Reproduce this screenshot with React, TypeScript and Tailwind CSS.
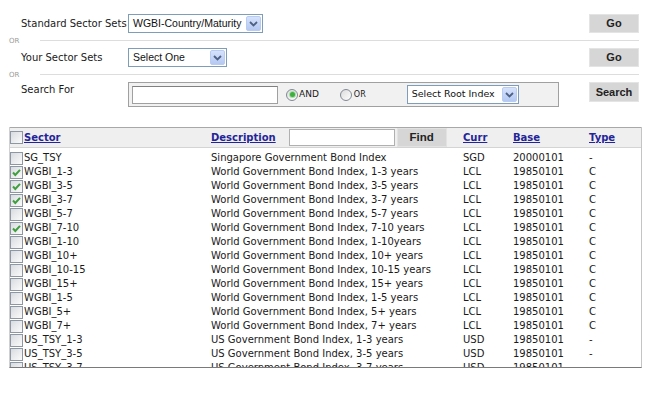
import React from "react";

type Row = { s: string; d: string; c: string; b: string; t: string; on?: boolean };

const rows: Row[] = [
  { s: "SG_TSY", d: "Singapore Government Bond Index", c: "SGD", b: "20000101", t: "-" },
  { s: "WGBI_1-3", d: "World Government Bond Index, 1-3 years", c: "LCL", b: "19850101", t: "C", on: true },
  { s: "WGBI_3-5", d: "World Government Bond Index, 3-5 years", c: "LCL", b: "19850101", t: "C", on: true },
  { s: "WGBI_3-7", d: "World Government Bond Index, 3-7 years", c: "LCL", b: "19850101", t: "C", on: true },
  { s: "WGBI_5-7", d: "World Government Bond Index, 5-7 years", c: "LCL", b: "19850101", t: "C" },
  { s: "WGBI_7-10", d: "World Government Bond Index, 7-10 years", c: "LCL", b: "19850101", t: "C", on: true },
  { s: "WGBI_1-10", d: "World Government Bond Index, 1-10years", c: "LCL", b: "19850101", t: "C" },
  { s: "WGBI_10+", d: "World Government Bond Index, 10+ years", c: "LCL", b: "19850101", t: "C" },
  { s: "WGBI_10-15", d: "World Government Bond Index, 10-15 years", c: "LCL", b: "19850101", t: "C" },
  { s: "WGBI_15+", d: "World Government Bond Index, 15+ years", c: "LCL", b: "19850101", t: "C" },
  { s: "WGBI_1-5", d: "World Government Bond Index, 1-5 years", c: "LCL", b: "19850101", t: "C" },
  { s: "WGBI_5+", d: "World Government Bond Index, 5+ years", c: "LCL", b: "19850101", t: "C" },
  { s: "WGBI_7+", d: "World Government Bond Index, 7+ years", c: "LCL", b: "19850101", t: "C" },
  { s: "US_TSY_1-3", d: "US Government Bond Index, 1-3 years", c: "USD", b: "19850101", t: "-" },
  { s: "US_TSY_3-5", d: "US Government Bond Index, 3-5 years", c: "USD", b: "19850101", t: "-" },
  { s: "US_TSY_3-7", d: "US Government Bond Index, 3-7 years", c: "USD", b: "19850101", t: "-" },
];

function Arrow() {
  return (
    <div className="w-[15px] h-[15px] mr-[1px] rounded-[2px] bg-gradient-to-b from-[#d6e2fb] to-[#b4c8f2] border border-[#b8cbf2] flex items-center justify-center">
      <svg width="9" height="6" viewBox="0 0 9 6">
        <path d="M1 1 L4.5 4.5 L8 1" fill="none" stroke="#4d6185" strokeWidth="1.8" />
      </svg>
    </div>
  );
}

function Select({ w, text, small }: { w: string; text: string; small?: boolean }) {
  return (
    <div className={`${w} h-[19px] border border-[#7f9db9] bg-white flex items-center justify-between`}>
      <span
        className={
          small
            ? "pl-[4px] font-['DejaVu_Sans'] text-[9.5px] text-[#111] whitespace-nowrap"
            : "pl-[4px] font-['Liberation_Sans'] text-[10.5px] text-[#111] whitespace-nowrap"
        }
      >
        {text}
      </span>
      <Arrow />
    </div>
  );
}

function Btn({ label, h }: { label: string; h: string }) {
  return (
    <div
      className={`w-[50px] ${h} bg-[#d6d6d6] border border-[#e4e4e4] flex items-center justify-center font-['Liberation_Sans'] font-bold text-[11px] text-[#222]`}
    >
      {label}
    </div>
  );
}

function Check({ on }: { on?: boolean }) {
  return (
    <div className="w-[13px] h-[13px] border border-[#8e98a4] bg-gradient-to-br from-[#d8dbe0] to-[#fbfbfb] flex items-center justify-center">
      {on && (
        <svg width="11" height="11" viewBox="0 0 11 11">
          <path d="M2 5.5 L4.3 8 L9 2.8" fill="none" stroke="#3f9f3f" strokeWidth="2" />
        </svg>
      )}
    </div>
  );
}

function Radio({ on }: { on?: boolean }) {
  return (
    <div className="w-[12px] h-[12px] rounded-full border border-[#808a94] bg-gradient-to-br from-[#dcdcdc] to-white flex items-center justify-center">
      {on && <div className="w-[5px] h-[5px] rounded-full bg-[#3fae3f] ring-1 ring-[#a8dca8]" />}
    </div>
  );
}

function Sep() {
  return (
    <div className="h-[15px] flex items-center pl-[9px] pr-[11px]">
      <span className="w-[31px] pt-[2px] text-[7px] text-[#9a9a9a] leading-none">OR</span>
      <div className="flex-1 h-px bg-[#dddddd]" />
    </div>
  );
}

const grid = "grid grid-cols-[14px_187px_252px_50px_76px_1fr] items-center";

export default function App() {
  return (
    <div className="w-[650px] h-[400px] bg-white overflow-hidden font-['DejaVu_Sans'] text-[10px] text-[#1a1a1a]">
      <div className="pt-[14px]">
        <div className="grid grid-cols-[128px_461px_50px] items-center h-[19px]">
          <div className="pl-[21px] whitespace-nowrap">Standard Sector Sets</div>
          <div><Select w="w-[135px]" text="WGBI-Country/Maturity" /></div>
          <Btn label="Go" h="h-[19px]" />
        </div>
        <Sep />
        <div className="grid grid-cols-[128px_461px_50px] items-center h-[19px]">
          <div className="pl-[21px] whitespace-nowrap">Your Sector Sets</div>
          <div><Select w="w-[99px]" text="Select One" /></div>
          <Btn label="Go" h="h-[19px]" />
        </div>
        <Sep />
        <div className="grid grid-cols-[128px_461px_50px] items-start h-[25px]">
          <div className="pl-[21px] whitespace-nowrap">Search For</div>
          <div className="w-[431px] h-[25px] border border-[#a0a0a0] bg-[#f1f1f1] flex items-center pl-[3px]">
            <div className="w-[146px] h-[18px] bg-white border border-[#a0a0a0] border-t-[#808080]" />
            <div className="ml-[8px]"><Radio on /></div>
            <span className="ml-[1px] text-[9px]">AND</span>
            <div className="ml-[21px]"><Radio /></div>
            <span className="ml-[2px] text-[8px]">OR</span>
            <div className="ml-[41px]"><Select w="w-[112px]" text="Select Root Index" small /></div>
          </div>
          <Btn label="Search" h="h-[20px]" />
        </div>
      </div>

      <div className="mt-[20px] ml-[9px] w-[633px] h-[241px] border-l border-r border-b border-l-[#d0d0d0] border-r-[#c4c4c4] border-b-[#7a7a7a] overflow-hidden">
        <div className={`${grid} h-[21px] bg-[#efefef] border-t border-[#a8a8a8] border-b border-b-[#d4d4d4]`}>
          <Check />
          <span className="font-bold text-[#24249a] underline">Sector</span>
          <div className="flex items-center">
            <span className="font-bold text-[#24249a] underline">Description</span>
            <div className="ml-[13px] w-[106px] h-[17px] bg-white border border-[#b0b0b0]" />
            <div className="ml-[2px] w-[50px] h-[19px] bg-[#d6d6d6] border border-[#e2e2e2] flex items-center justify-center font-['Liberation_Sans'] font-bold text-[11.5px] text-[#222]">
              Find
            </div>
          </div>
          <span className="font-bold text-[#24249a] underline">Curr</span>
          <span className="font-bold text-[#24249a] underline">Base</span>
          <span className="font-bold text-[#24249a] underline">Type</span>
        </div>
        <div className="pt-[3px]">
          {rows.map((r) => (
            <div key={r.s} className={`${grid} h-[14px] leading-[14px] whitespace-nowrap`}>
              <Check on={r.on} />
              <span>{r.s}</span>
              <span>{r.d}</span>
              <span>{r.c}</span>
              <span>{r.b}</span>
              <span>{r.t}</span>
            </div>
          ))}
        </div>
      </div>
    </div>
  );
}
